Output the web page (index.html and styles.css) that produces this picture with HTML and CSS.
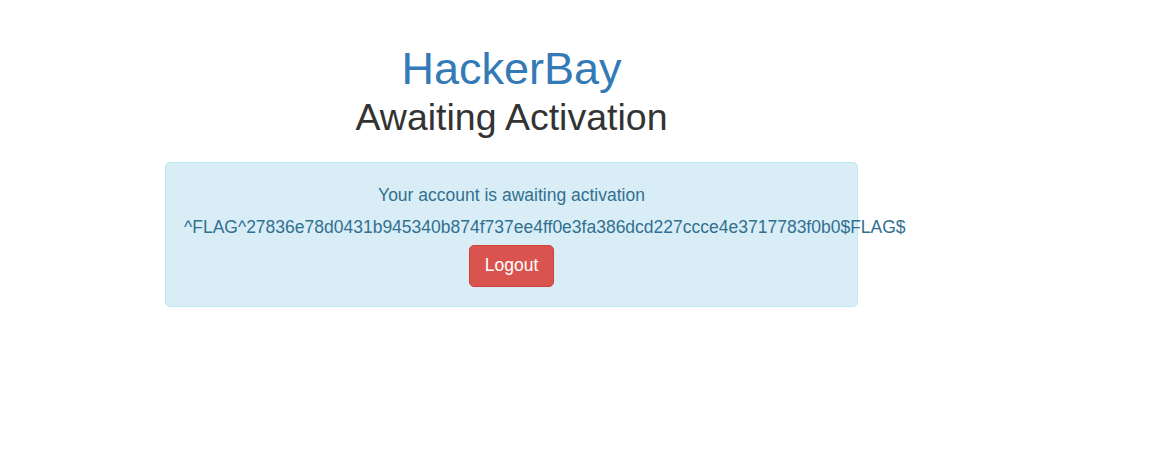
FILE: index.html
```html
<!DOCTYPE html>
<html lang="en">
<head>
<meta charset="utf-8">
<title>HackerBay - Awaiting Activation</title>
<link rel="stylesheet" href="styles.css">
</head>
<body>
<main class="page">
  <section class="column">
    <h1 class="brand">HackerBay</h1>
    <h2 class="title">Awaiting Activation</h2>
    <div class="alert">
      <p class="line line-first">Your account is awaiting activation</p>
      <p class="line line-flag">^FLAG^27836e78d0431b945340b874f737ee4ff0e3fa386dcd227ccce4e3717783f0b0$FLAG$</p>
      <button class="btn-danger" type="button">Logout</button>
    </div>
  </section>
</main>
</body>
</html>
```

FILE: styles.css
```css
html, body {
  margin: 0;
  padding: 0;
  background: #ffffff;
}

body {
  font-family: "Liberation Sans", Arial, Helvetica, sans-serif;
  font-size: 17.5px;
  line-height: 25px;
  color: #333333;
}

.page {
  display: flex;
  padding: 44px 0 0 165px;
}

.column {
  width: 693px;
  display: flex;
  flex-direction: column;
  text-align: center;
}

.brand {
  margin: 0;
  font-size: 45px;
  line-height: 49.5px;
  font-weight: 500;
  color: #337ab7;
}

.title {
  margin: 3px 0 0;
  font-size: 37.5px;
  line-height: 41.25px;
  font-weight: 500;
  color: #333333;
}

.alert {
  margin-top: 24px;
  box-sizing: border-box;
  width: 693px;
  height: 145px;
  padding: 20px 19px 19px;
  border: 1px solid #bce8f1;
  border-radius: 5px;
  background: #d9edf7;
  color: #31708f;
  display: flex;
  flex-direction: column;
  align-items: center;
}

.line {
  margin: 0;
  white-space: nowrap;
}

.line-first {
  margin-bottom: 7px;
}

.line-flag {
  align-self: flex-start;
  margin: 0 0 5px -1px;
}

.btn-danger {
  box-sizing: border-box;
  height: 42px;
  padding: 0 15px;
  font-family: inherit;
  font-size: 17.5px;
  line-height: 25px;
  color: #ffffff;
  background: #d9534f;
  border: 1px solid #d43f3a;
  border-radius: 5px;
  cursor: pointer;
}
```
